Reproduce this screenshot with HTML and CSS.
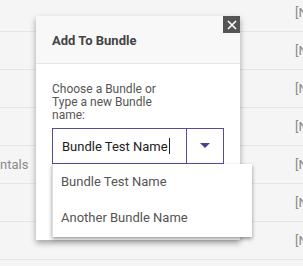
FILE: index.html
```html
<!DOCTYPE html>
<html lang="en">
<head>
  <meta charset="UTF-8">
  <meta name="viewport" content="width=device-width, initial-scale=1.0">
  <title>Add To Bundle</title>
  <link rel="stylesheet" href="styles.css">
</head>
<body>

  <!-- Table rows behind the modal -->
  <div class="rows">
    <div class="row"><span class="left"></span><span class="right">[N</span></div>
    <div class="row"><span class="left"></span><span class="right">[N</span></div>
    <div class="row"><span class="left"></span><span class="right">[N</span></div>
    <div class="row"><span class="left"></span><span class="right">[N</span></div>
    <div class="row"><span class="left">ntals</span><span class="right">[N</span></div>
    <div class="row"><span class="left"></span><span class="right">[N</span></div>
    <div class="row"><span class="left"></span><span class="right">[N</span></div>
  </div>

  <!-- Modal -->
  <div class="modal">
    <button class="close-btn" aria-label="Close">
      <svg width="10" height="10" viewBox="0 0 10 10">
        <path d="M1 1 L9 9 M9 1 L1 9" stroke="#fff" stroke-width="1.6" fill="none"/>
      </svg>
    </button>
    <div class="modal-header">Add To Bundle</div>
    <div class="modal-body">
      <label class="field-label" for="bundle">Choose a Bundle or Type a new Bundle name:</label>
      <div class="combo-wrap">
        <div class="combo">
          <div class="combo-input" id="bundle">Bundle Test Name<span class="caret-line"></span></div>
          <div class="combo-toggle">
            <svg width="10" height="6" viewBox="0 0 10 6"><path d="M0 0 H10 L5 5 Z" fill="#4b3f8f"/></svg>
          </div>
        </div>
        <ul class="menu">
          <li>Bundle Test Name</li>
          <li>Another Bundle Name</li>
        </ul>
      </div>
    </div>
  </div>

</body>
</html>
```

FILE: styles.css
```css
body {
  font-family: Roboto, "Liberation Sans", sans-serif;
  margin: 0;
  background: #f5f5f5;
  overflow: hidden;
  width: 303px;
  height: 266px;
}
.rows {
  margin-top: -6px;
}
.row {
  height: 37px;
  border-bottom: 1px solid #e6e6e6;
  display: flex;
  justify-content: space-between;
  align-items: center;
  font-size: 13px;
  color: #8a8a8a;
}
.row .right {
  width: 8px;
  white-space: nowrap;
}
.modal {
  position: absolute;
  left: 36px;
  top: 16px;
  width: 204px;
  height: 224px;
  background: #fff;
  box-shadow: 0 3px 6px rgba(0, 0, 0, 0.35);
}
.close-btn {
  position: absolute;
  top: 0;
  right: 0;
  width: 17px;
  height: 17px;
  padding: 0;
  border: none;
  background: #555;
  display: flex;
  align-items: center;
  justify-content: center;
}
.modal-header {
  height: 48px;
  background: #f8f8f8;
  border-bottom: 1px solid #e6e6e6;
  padding-left: 16px;
  padding-top: 17px;
  box-sizing: border-box;
  font-size: 13px;
  font-weight: bold;
  color: #444;
}
.modal-body {
  padding: 19px 16px 0;
}
.field-label {
  display: block;
  width: 110px;
  font-size: 12px;
  line-height: 13px;
  color: #555;
}
.combo-wrap {
  position: relative;
  margin-top: 6px;
}
.combo {
  display: flex;
  width: 172px;
  height: 36px;
  border: 1px solid #5a4a9c;
  box-sizing: border-box;
}
.combo-input {
  flex: 1;
  display: flex;
  align-items: center;
  padding-left: 9px;
  font-size: 13px;
  color: #222;
  border-right: 1px solid #5a4a9c;
}
.caret-line {
  display: inline-block;
  width: 1px;
  height: 16px;
  margin-left: 1px;
  background: #222;
}
.combo-toggle {
  width: 36px;
  display: flex;
  align-items: center;
  justify-content: center;
}
.menu {
  position: absolute;
  left: 0;
  top: 100%;
  width: 200px;
  margin: 0;
  padding: 0;
  list-style: none;
  background: #fff;
  box-shadow: 0 2px 4px rgba(0, 0, 0, 0.4);
  border-left: 1px solid #ddd;
  box-sizing: border-box;
}
.menu li {
  height: 36px;
  line-height: 36px;
  padding-left: 8px;
  font-size: 13px;
  color: #555;
}
.menu li:last-child {
  height: 37px;
}
```
